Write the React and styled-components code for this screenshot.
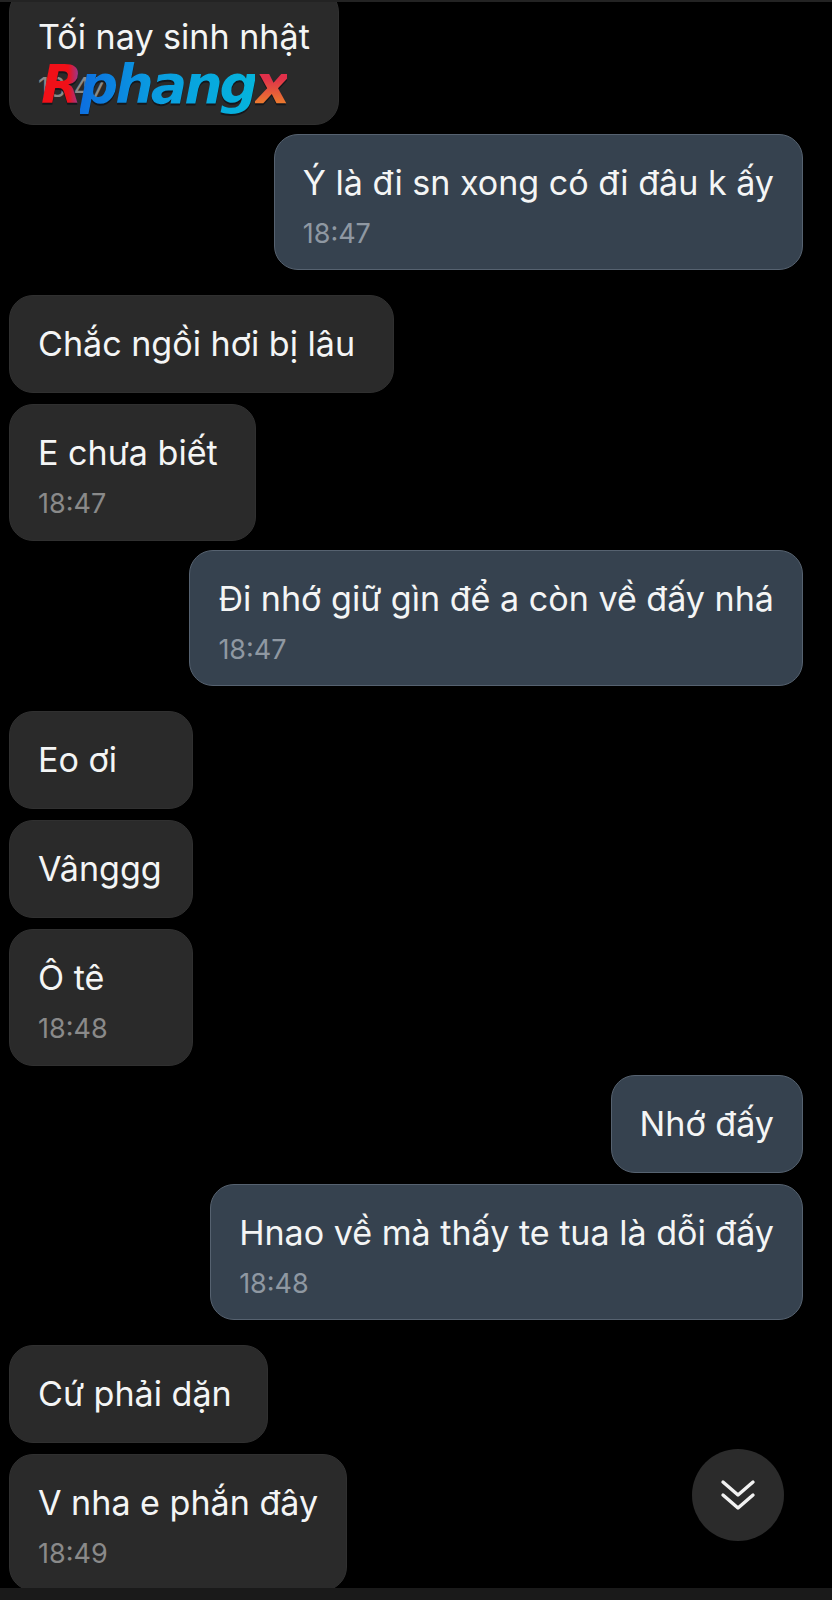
import React from "react";
import styled, { createGlobalStyle } from "styled-components";

const GlobalStyle = createGlobalStyle`
  html, body {
    margin: 0;
    padding: 0;
    background: #000;
  }
`;

const Screen = styled.div`
  position: relative;
  width: 832px;
  height: 1600px;
  overflow: hidden;
  background: #000;
  font-family: Inter, "Noto Sans", sans-serif;
  display: flex;
  flex-direction: column;
`;

const TopLine = styled.div`
  position: relative;
  z-index: 1;
  height: 2px;
  background: #232323;
  flex: none;
`;

const Thread = styled.div`
  flex: 1;
  min-height: 0;
  display: flex;
  flex-direction: column;
  gap: 9px;
  padding: 0 29px 0 9px;
  margin-top: -14px;
`;

const Group = styled.div`
  display: flex;
  flex-direction: column;
  gap: 11px;
  align-items: ${(p) => (p.$own ? "flex-end" : "flex-start")};
  margin-top: ${(p) => (p.$spaced ? "16px" : "0")};
`;

const Bubble = styled.div`
  position: relative;
  box-sizing: border-box;
  padding: 23px 28px;
  min-width: ${(p) => p.$min || 0}px;
  border-radius: 24px;
  background: ${(p) => (p.$own ? "#36424f" : "#2a2a2a")};
  border: 1px solid ${(p) => (p.$own ? "#566270" : "#303030")};
`;

const Text = styled.div`
  font-size: 34.1px;
  line-height: 50px;
  color: #f4f5f5;
  white-space: nowrap;
`;

const Time = styled.div`
  font-size: 27px;
  line-height: 30px;
  margin: 11px 0 ${(p) => (p.$own ? "-3px" : "-2px")};
  color: ${(p) => (p.$own ? "#8f98a2" : "#8a8a8a")};
`;

const Watermark = styled.div`
  position: absolute;
  left: 31px;
  top: 64px;
  font-family: "DejaVu Sans", sans-serif;
  font-size: 54px;
  line-height: 64px;
  font-weight: 700;
  font-style: italic;
  letter-spacing: -3px;
  white-space: nowrap;
  filter: drop-shadow(0 2px 0 #14171c);
`;

const MarkPart = styled.span`
  background: linear-gradient(${(p) => p.$fill});
  -webkit-background-clip: text;
  background-clip: text;
  color: transparent;
`;

const BottomBar = styled.div`
  position: relative;
  z-index: 1;
  height: 12px;
  flex: none;
  background: #1a1a1a;
`;

const ScrollButton = styled.div`
  position: absolute;
  left: 692px;
  top: 1449px;
  width: 92px;
  height: 92px;
  border-radius: 50%;
  background: #2b2b2b;
  display: flex;
  align-items: center;
  justify-content: center;
`;

const Msg = ({ own, text, time, min }) => (
  <Bubble $own={own} $min={min}>
    <Text>{text}</Text>
    {time && <Time $own={own}>{time}</Time>}
  </Bubble>
);

export default function App() {
  return (
    <Screen>
      <GlobalStyle />
      <TopLine />
      <Thread>
        <Group>
          <Bubble>
            <Text>Tối nay sinh nhật</Text>
            <Time>18:47</Time>
            <Watermark>
              <MarkPart $fill="90deg, #f01018 70%, #8a3fa0">R</MarkPart>
              <MarkPart $fill="90deg, #0d6fe0, #0a9be0">ph</MarkPart>
              <MarkPart $fill="90deg, #0a9be0, #05b4dc">ang</MarkPart>
              <MarkPart $fill="180deg, #e0304a 40%, #f0a020">x</MarkPart>
            </Watermark>
          </Bubble>
        </Group>
        <Group $own>
          <Msg own text="Ý là đi sn xong có đi đâu k ấy" time="18:47" />
        </Group>
        <Group $spaced>
          <Msg text="Chắc ngồi hơi bị lâu" min={385} />
          <Msg text="E chưa biết" time="18:47" min={247} />
        </Group>
        <Group $own>
          <Msg own text="Đi nhớ giữ gìn để a còn về đấy nhá" time="18:47" />
        </Group>
        <Group $spaced>
          <Msg text="Eo ơi" min={184} />
          <Msg text="Vânggg" min={184} />
          <Msg text="Ô tê" time="18:48" min={184} />
        </Group>
        <Group $own>
          <Msg own text="Nhớ đấy" />
          <Msg own text="Hnao về mà thấy te tua là dỗi đấy" time="18:48" />
        </Group>
        <Group $spaced>
          <Msg text="Cứ phải dặn" min={259} />
          <Msg text="V nha e phắn đây" time="18:49" />
        </Group>
      </Thread>
      <BottomBar />
      <ScrollButton>
        <svg width="36" height="32" viewBox="0 0 36 32" fill="none" stroke="#f2f2f2" strokeWidth="3.4" strokeLinecap="round" strokeLinejoin="round">
          <path d="M3 3 L18 16 L33 3" />
          <path d="M3 16 L18 29 L33 16" />
        </svg>
      </ScrollButton>
    </Screen>
  );
}
